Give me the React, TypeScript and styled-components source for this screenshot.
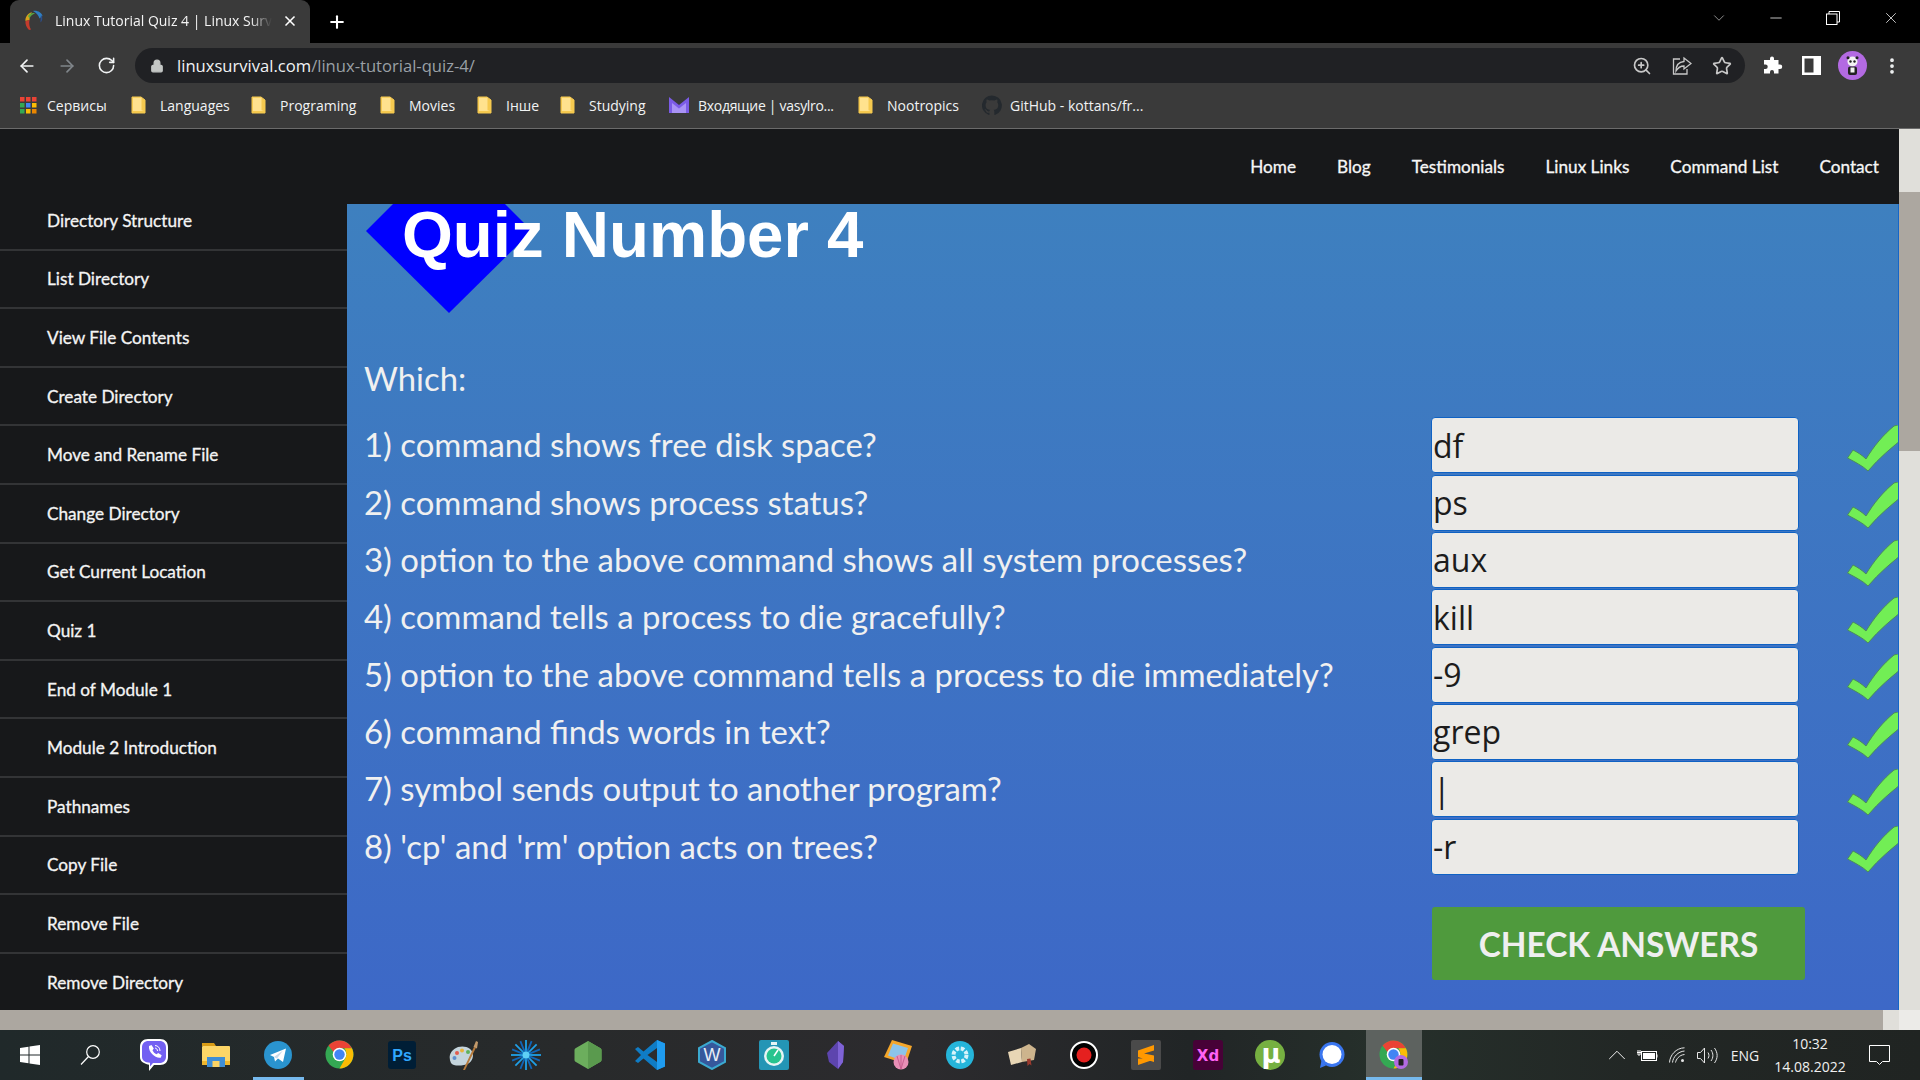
import React from "react";
import styled, { createGlobalStyle } from "styled-components";
import {
  ArrowLeft,
  ArrowRight,
  RotateCw,
  Lock,
  ZoomIn,
  Star,
  MoreVertical,
  X,
  Plus,
  Minus,
  ChevronDown,
  ChevronUp,
} from "lucide-react";

const chromeFont = `"Open Sans", "Noto Sans", "Liberation Sans", sans-serif`;
const siteFont = `Lato, "Open Sans", "Liberation Sans", sans-serif`;

const GlobalStyle = createGlobalStyle`
  html, body {
    margin: 0;
    padding: 0;
    overflow: hidden;
    background: #000;
  }
  * {
    box-sizing: border-box;
  }
`;

const Screen = styled.div`
  width: 1920px;
  height: 1080px;
  display: flex;
  flex-direction: column;
  overflow: hidden;
`;

/* browser chrome */
const TabStrip = styled.div`
  height: 43px;
  flex: none;
  background: #000;
  display: flex;
  align-items: center;
  padding-left: 10px;
  color: #fff;
`;

const Tab = styled.div`
  width: 300px;
  height: 43px;
  align-self: flex-end;
  background: #3a3a3a;
  border-radius: 9px 9px 0 0;
  display: flex;
  align-items: center;
  padding-left: 14px;
  padding-bottom: 2px;
`;

const TabTitle = styled.span`
  font: 14px ${chromeFont};
  color: #f4f4f4;
  width: 217px;
  margin-left: 11px;
  white-space: nowrap;
  overflow: hidden;
  mask-image: linear-gradient(90deg, #000 90%, transparent);
`;

const TabClose = styled.span`
  display: flex;
  margin-left: 10px;
`;

const NewTab = styled.span`
  display: flex;
  margin-left: 17px;
`;

const WindowControls = styled.div`
  margin-left: auto;
  display: flex;
  align-items: center;
  padding-bottom: 7px;
`;

const WindowButton = styled.span<{ $w: number }>`
  width: ${(p) => p.$w}px;
  display: flex;
  justify-content: center;
`;

const Toolbar = styled.div`
  height: 45px;
  flex: none;
  background: #3a3a3a;
  display: flex;
  align-items: flex-start;
  padding-top: 5px;
`;

const NavIcons = styled.div`
  width: 135px;
  height: 35px;
  display: flex;
  align-items: center;
  padding-left: 17px;
  gap: 20px;
`;

const Omnibox = styled.div`
  width: 1610px;
  height: 35px;
  background: #202124;
  border-radius: 18px;
  display: flex;
  align-items: center;
  padding-left: 15px;
  padding-right: 13px;
`;

const Url = styled.span`
  font: 16.6px ${chromeFont};
  color: #f1f3f4;
  margin-left: 13px;
`;

const UrlPath = styled.span`
  color: #9aa0a6;
`;

const OmniActions = styled.div`
  margin-left: auto;
  display: flex;
  align-items: center;
  gap: 20px;
`;

const ToolbarActions = styled.div`
  height: 35px;
  display: flex;
  align-items: center;
  padding-left: 18px;
  gap: 19px;
`;

const Avatar = styled.span`
  width: 29px;
  height: 29px;
  border-radius: 50%;
  background: #b36ae2;
  display: flex;
  align-items: center;
  justify-content: center;
  margin-left: -2px;
`;

const MenuDots = styled(MoreVertical)`
  margin-left: -4px;
`;

const BookmarkBar = styled.div`
  height: 41px;
  flex: none;
  background: #3a3a3a;
  border-bottom: 1px solid #6b6b6b;
  display: flex;
  align-items: center;
  padding-left: 20px;
  padding-bottom: 6px;
`;

const Bookmark = styled.div<{ $w: number; $gap?: number; $tight?: boolean }>`
  width: ${(p) => p.$w}px;
  display: flex;
  align-items: center;
  gap: ${(p) => p.$gap ?? 10}px;
  font: 14px ${chromeFont};
  letter-spacing: ${(p) => (p.$tight ? "-0.3px" : "0")};
  color: #f1f3f4;
  white-space: nowrap;
`;

const FolderGlyph = styled.svg`
  margin-right: 4px;
`;

/* page */
const Viewport = styled.div`
  height: 881px;
  flex: none;
  display: flex;
`;

const Page = styled.div`
  width: 1899px;
  display: flex;
  flex-direction: column;
  background: #17181a;
  overflow: hidden;
`;

const SiteHeader = styled.header`
  height: 75px;
  flex: none;
  display: flex;
  align-items: center;
  justify-content: flex-end;
  padding-right: 20px;
  gap: 41px;
`;

const NavLink = styled.a`
  font: 17.2px ${siteFont};
  -webkit-text-stroke: 0.3px #f6f6f6;
  color: #f6f6f6;
`;

const Body = styled.div`
  flex: 1;
  display: flex;
`;

const Sidebar = styled.nav`
  width: 347px;
  flex: none;
  margin-top: -12px;
`;

const SideItem = styled.a`
  display: flex;
  align-items: center;
  height: 58.6px;
  padding-left: 47px;
  border-bottom: 2px solid #333436;
  font: 17.2px ${siteFont};
  -webkit-text-stroke: 0.3px #f4f4f4;
  color: #f4f4f4;
`;

const Content = styled.main`
  width: 1552px;
  position: relative;
  padding-left: 17px;
  border-right: 1px solid #1566c8;
  border-bottom: 1px solid #1566c8;
  background: linear-gradient(180deg, #3e80bf 0%, #3d68c7 100%);
`;

const Diamond = styled.div`
  position: absolute;
  left: 19px;
  top: 0;
  width: 166px;
  height: 109px;
  background: #0000ff;
  clip-path: polygon(27px 0, 139px 0, 166px 27px, 83px 109px, 0 27px);
`;

const Title = styled.h1`
  position: relative;
  margin: 0 0 0 38px;
  height: 60px;
  font: 700 65.4px/62px "Liberation Sans", Arial, sans-serif;
  color: #fff;
`;

const Lead = styled.p`
  margin: 93px 0 0;
  height: 59.5px;
  font: 32.8px/44px ${siteFont};
  color: #f0f0f0;
`;

const QuizRow = styled.div`
  display: grid;
  grid-template-columns: 1067px 368px 48px 51px;
  height: 57.35px;
  align-items: center;
`;

const Question = styled.span`
  font: 32.9px ${siteFont};
  color: #f0f0f0;
  padding-bottom: 1px;
`;

const AnswerField = styled.div`
  height: 56px;
  background: #ebeae7;
  border: 1px solid #0f62c4;
  border-radius: 4px;
  padding-left: 1px;
  display: flex;
  align-items: center;
  font: 32px ${chromeFont};
  color: #1c1c1c;
`;

const Tick = styled.svg`
  align-self: end;
  margin-bottom: 2px;
`;

const ActionRow = styled.div`
  margin-top: 32px;
  margin-left: 1068px;
`;

const CheckButton = styled.button`
  width: 373px;
  height: 73px;
  border: none;
  border-radius: 3px;
  background: #4f9a3d;
  color: #efefef;
  font: 700 33.4px ${siteFont};
  padding: 0;
`;

const VerticalScroll = styled.div`
  width: 21px;
  flex: none;
  background: #e0dfda;
  padding-top: 63px;
`;

const VerticalThumb = styled.div`
  height: 259px;
  background: #aca7a0;
`;

const HorizontalScroll = styled.div`
  height: 20px;
  flex: none;
  display: flex;
`;

const HorizontalThumb = styled.div`
  width: 1883px;
  background: #aca7a0;
`;

const ScrollButton = styled.div`
  width: 16px;
  background: #e0dfda;
`;

const ScrollCorner = styled.div`
  flex: 1;
  background: #ecebe8;
`;

/* taskbar */
const Taskbar = styled.div`
  height: 50px;
  flex: none;
  display: flex;
  align-items: stretch;
  background: linear-gradient(90deg, #20292a 0%, #282a2b 30%, #2c2b2e 48%, #212526 62%, #26302b 72%, #222725 85%, #202422 100%);
  color: #f0f0f0;
`;

const StartButton = styled.div`
  width: 60px;
  display: flex;
  align-items: center;
  justify-content: center;
`;

const SearchButton = styled(StartButton)`
  margin-right: 3px;
`;

const TaskSlot = styled.div<{ $active?: boolean; $running?: boolean }>`
  width: ${(p) => (p.$active ? 56 : 62)}px;
  margin: ${(p) => (p.$active ? "0 3px" : "0")};
  display: flex;
  align-items: center;
  justify-content: center;
  position: relative;
  background: ${(p) => (p.$active ? "#5d625f" : "transparent")};

  &::after {
    content: "";
    display: ${(p) => (p.$running ? "block" : "none")};
    position: absolute;
    left: ${(p) => (p.$active ? 0 : 6)}px;
    right: ${(p) => (p.$active ? 0 : 5)}px;
    bottom: 0;
    height: 3px;
    background: #76b9ed;
  }
`;

const Tray = styled.div`
  margin-left: auto;
  display: flex;
  align-items: center;
`;

const TrayIcon = styled.span<{ $w: number }>`
  width: ${(p) => p.$w}px;
  display: flex;
  justify-content: center;
`;

const TrayLang = styled.span`
  width: 46px;
  text-align: center;
  font: 14px ${chromeFont};
`;

const Clock = styled.div`
  width: 84px;
  text-align: center;
  font: 14px/23px ${chromeFont};
`;

const Notify = styled.span`
  width: 68px;
  padding-right: 14px;
  display: flex;
  justify-content: center;
`;

const sideItems = [
  "Directory Structure",
  "List Directory",
  "View File Contents",
  "Create Directory",
  "Move and Rename File",
  "Change Directory",
  "Get Current Location",
  "Quiz 1",
  "End of Module 1",
  "Module 2 Introduction",
  "Pathnames",
  "Copy File",
  "Remove File",
  "Remove Directory",
];

const navItems = ["Home", "Blog", "Testimonials", "Linux Links", "Command List", "Contact"];

const quiz = [
  ["1) command shows free disk space?", "df"],
  ["2) command shows process status?", "ps"],
  ["3) option to the above command shows all system processes?", "aux"],
  ["4) command tells a process to die gracefully?", "kill"],
  ["5) option to the above command tells a process to die immediately?", "-9"],
  ["6) command finds words in text?", "grep"],
  ["7) symbol sends output to another program?", "|"],
  ["8) 'cp' and 'rm' option acts on trees?", "-r"],
];

const FolderIcon = () => (
  <FolderGlyph width="15" height="18" viewBox="0 0 15 18">
    <path d="M1 1h9l4 3v13H1z" fill="#f5c94f" stroke="#f5c94f" strokeLinejoin="round" />
    <path d="M2 1.800h8.500v12.500l2.500.8H2z" fill="#ffe28e" />
  </FolderGlyph>
);

const AppsIcon = () => {
  const colors = ["#ea4335", "#ea4335", "#ea4335", "#34a853", "#4285f4", "#fbbc04", "#34a853", "#fbbc04", "#ea8600"];
  return (
    <svg width="17" height="17" viewBox="0 0 17 17">
      {colors.map((c, i) => (
        <rect key={i} x={(i % 3) * 6} y={Math.floor(i / 3) * 6} width="4.500" height="4.500" fill={c} />
      ))}
    </svg>
  );
};

const MailIcon = () => (
  <svg width="20" height="16" viewBox="0 0 20 16">
    <path d="M0 0l10 8 10-8v16H0z" fill="#7b5be6" />
    <path d="M3 6l7 5.500L17 6v10H3z" fill="#a993f5" />
  </svg>
);

const GithubIcon = () => (
  <svg width="20" height="20" viewBox="0 0 24 24">
    <path
      fill="#24292e"
      d="M12 .5a12 12 0 0 0-3.800 23.400c.6.100.8-.3.8-.6v-2c-3.300.7-4-1.600-4-1.600-.6-1.400-1.400-1.800-1.400-1.800-1.100-.7.100-.7.100-.7 1.200.1 1.800 1.200 1.800 1.200 1.100 1.800 2.800 1.300 3.500 1 .1-.8.4-1.300.8-1.600-2.700-.3-5.500-1.300-5.500-5.900 0-1.300.5-2.400 1.200-3.200-.1-.3-.5-1.500.1-3.200 0 0 1-.3 3.300 1.200a11.500 11.500 0 0 1 6 0c2.300-1.500 3.300-1.200 3.300-1.200.7 1.700.2 2.900.1 3.200.8.800 1.200 1.900 1.200 3.200 0 4.600-2.800 5.600-5.500 5.900.4.400.8 1.100.8 2.200v3.300c0 .3.2.7.8.6A12 12 0 0 0 12 .5z"
    />
  </svg>
);

const Favicon = () => (
  <svg width="20" height="21" viewBox="0 0 20 21">
    <path d="M8 2C3.500 3.500 1 7.500 1.500 11l4-1c0-3 .8-6 2.500-8z" fill="#d9a21b" />
    <path d="M5 20C2.500 17.500 1 14 1.500 11l4-1c-.8 3.500 0 7 1.500 9.500z" fill="#c43b2c" />
    <path d="M9 1c4.500-.8 8.500 1.500 9.500 5l-3 2.500C14.500 5.500 12.500 2.800 9 1z" fill="#2f7fc4" />
    <path d="M17 5c2 2.500 1.500 5.500-.5 7.500 0-2.500 0-5 .5-7.500z" fill="#2c4f8c" />
    <path d="M4 6c1.800-2.500 4.500-3.500 7-2.500-2.500.8-4.500 2.500-5.500 5z" fill="#5aa541" />
  </svg>
);

const PandaFace = () => (
  <svg width="15" height="19" viewBox="0 0 15 19">
    <circle cx="7.500" cy="5.500" r="5" fill="#f3f3f3" />
    <circle cx="3" cy="1.800" r="1.500" fill="#222" />
    <circle cx="12" cy="1.800" r="1.500" fill="#222" />
    <circle cx="5.500" cy="5.500" r="1.200" fill="#222" />
    <circle cx="9.500" cy="5.500" r="1.200" fill="#222" />
    <rect x="3" y="10.500" width="9" height="8.500" rx="2" fill="#222" />
    <rect x="5.500" y="11.500" width="4" height="5" fill="#f3f3f3" />
  </svg>
);

const CheckMark = () => (
  <Tick width="51" height="47" viewBox="0 0 51 47">
    <path
      d="M0.500 33 L6 25 C10 27 15 30 19 34 C27 21 36 10 47 1 L58 -2 L58 12 C45 22 32 33 21 46 C16 41 8 37 0.500 33 Z"
      fill="#72ee55"
      stroke="#4b8c5c"
      strokeWidth="1"
    />
  </Tick>
);

/* taskbar logos */
const ViberIcon = () => (
  <svg width="28" height="32" viewBox="0 0 28 32">
    <path d="M8 0h12c5 0 8 3 8 8v10c0 5-3 8-8 8h-6l-5 6v-6.300C3 24.500 0 22 0 18V8c0-5 3-8 8-8z" fill="#fff" />
    <path d="M8.500 2h11C23.500 2 26 4.500 26 8.500v9c0 4-2.500 6.500-6.500 6.500H13l-3 3.500v-3.800C5 23.500 2 21.500 2 17.500v-9C2 4.500 4.500 2 8.500 2z" fill="#7360f2" />
    <path d="M9 7l2.500-1 2.300 3.500-1.300 1.700c.9 2 2 3 4 4l1.700-1.300 3.500 2.300-1 2.500C16 20 8 13 9 7z" fill="#fff" />
    <path d="M15 6.500c3 .2 5 2.300 5 5.500M15 9c1.500.2 2.500 1.300 2.500 3" stroke="#fff" strokeWidth="1" fill="none" />
  </svg>
);

const ExplorerIcon = () => (
  <svg width="28" height="24" viewBox="0 0 28 24">
    <path d="M0 0h12l2 3H0z" fill="#d99c16" />
    <rect y="3" width="28" height="19" rx="1" fill="#fdd667" />
    <path d="M0 18h28v4H0z" fill="#eeb62e" />
    <rect x="5" y="14" width="18" height="10" fill="#3f8ed6" />
    <rect x="10.500" y="18" width="7" height="6" fill="#fbd364" />
  </svg>
);

const TelegramIcon = () => (
  <svg width="28" height="28" viewBox="0 0 28 28">
    <circle cx="14" cy="14" r="14" fill="#2a94cf" />
    <path d="M6 14l16-6.500-3 13.500-5-3.500-3 3-1-4.500z" fill="#fff" />
    <path d="M10 16l9-6.500-6 8z" fill="#c8daea" />
  </svg>
);

const ChromeIcon = ({ badge }: { badge?: boolean }) => (
  <svg width="30" height="30" viewBox="0 0 30 30">
    <circle cx="14.500" cy="14.500" r="14" fill="#34a853" />
    <path d="M14.500.5c5.500 0 10.200 3.200 12.400 7.800H14.500a6.200 6.200 0 0 0-5.800 4L3.500 5.500C6 2.500 10 .5 14.500.5z" fill="#ea4335" />
    <path d="M26.900 8.300c2.700 5.500 1.500 11.500-2 15.500-3 3.300-6.500 4.700-10.400 4.700l6-10.500c1.500-2.800 1.200-6.500-1-9.700z" fill="#fbbc04" />
    <circle cx="14.500" cy="14.500" r="6.800" fill="#fff" />
    <circle cx="14.500" cy="14.500" r="5.200" fill="#4285f4" />
    {badge && <circle cx="22" cy="22" r="7" fill="#b36ae2" />}
    {badge && <rect x="19.500" y="19" width="5" height="6.500" rx="1" fill="#222" />}
  </svg>
);

const PsIcon = () => (
  <svg width="28" height="28" viewBox="0 0 28 28">
    <rect width="28" height="28" rx="3" fill="#001e36" />
    <text x="14" y="20" textAnchor="middle" fontFamily="Liberation Sans" fontWeight="700" fontSize="16" fill="#31a8ff">Ps</text>
  </svg>
);

const PaletteIcon = () => (
  <svg width="30" height="29" viewBox="0 0 30 29">
    <path d="M2 22C-1 16 1 9 9 6c7-2 15 1 15 8 0 5-3 9-9 10-5 1-11 1-13-2z" fill="#c4d4dc" />
    <circle cx="8" cy="12" r="2" fill="#e35d4f" />
    <circle cx="13" cy="9.500" r="2" fill="#e8b33a" />
    <circle cx="19" cy="11" r="2" fill="#5fb15b" />
    <circle cx="5.500" cy="17" r="2" fill="#5d8fd0" />
    <path d="M14 29L25 6l1.800.9L16 29z" fill="#b5793a" />
    <path d="M24.500 6L27 0l2 1-1 6.500z" fill="#c29a6b" />
  </svg>
);

const SparkIcon = () => (
  <svg width="30" height="30" viewBox="0 0 30 30" strokeWidth="1.800">
    {[0, 22, 45, 68, 90, 112, 135, 158].map((a) => (
      <line key={a} x1="15" y1="0" x2="15" y2="30" transform={`rotate(${a} 15 15)`} stroke={a % 45 === 0 ? "#1fa0e8" : "#1065b8"} />
    ))}
    <circle cx="15" cy="15" r="3.500" fill="#5fd0f5" />
  </svg>
);

const NodeIcon = () => (
  <svg width="28" height="30" viewBox="0 0 28 30">
    <path d="M14 1l12.500 7.300a2 2 0 0 1 1 1.700v10a2 2 0 0 1-1 1.700L14 29 1.500 21.700a2 2 0 0 1-1-1.700V10a2 2 0 0 1 1-1.700z" fill="#6cae5d" />
    <path d="M14 1l12.500 7.300a2 2 0 0 1 1 1.700v10a2 2 0 0 1-1 1.700L14 29z" fill="#5a9a4e" />
  </svg>
);

const VsCodeIcon = () => (
  <svg width="30" height="30" viewBox="0 0 30 30">
    <path d="M22 0l8 3.500v23L22 30 8.500 18.500 3 23l-3-2 6-6-6-6 3-2 5.500 4.500z" fill="#0f7cc5" />
    <path d="M22 0l8 3.500v23L22 30z" fill="#1f9cf0" />
    <path d="M22 8l-9.500 7 9.500 7z" fill="#2c2c2e" />
  </svg>
);

const WordIcon = () => (
  <svg width="30" height="30" viewBox="0 0 30 30">
    <path d="M15 1l13 7v14l-13 7-13-7V8z" fill="#36589c" stroke="#3ba9d0" strokeWidth="2" />
    <text x="15" y="21" textAnchor="middle" fontFamily="Liberation Sans" fontSize="18" fill="#e8eef6">W</text>
  </svg>
);

const TimerIcon = () => (
  <svg width="30" height="30" viewBox="0 0 30 30">
    <rect width="30" height="30" rx="2" fill="#2495b5" />
    <rect x="12" y="2" width="6" height="3" fill="#e6f4f4" />
    <circle cx="15" cy="16" r="10" fill="#e6f4f4" />
    <circle cx="15" cy="16" r="7.500" fill="#27c48f" />
    <path d="M15 16l4-6" stroke="#fff" strokeWidth="1.500" />
  </svg>
);

const ObsidianIcon = () => (
  <svg width="18" height="28" viewBox="0 0 18 28">
    <path d="M11 0l6 5-1 16-5 7L2 21 0 12z" fill="#5d45ae" />
    <path d="M11 0l6 5-1 16-5 7z" fill="#7f63d6" />
  </svg>
);

const PhotosIcon = () => (
  <svg width="28" height="30" viewBox="0 0 28 30">
    <path d="M8 0l20 6-6 18L0 17z" fill="#f4a62a" />
    <path d="M9 3.500l15 4.500-4.500 13L4 15.500z" fill="#8cc4ea" />
    <circle cx="17" cy="22" r="7.500" fill="#e88fb6" />
    <path d="M17 15v14M13 16l4 13M21 16l-4 13" stroke="#c95f91" />
  </svg>
);

const GearBadgeIcon = () => (
  <svg width="28" height="28" viewBox="0 0 28 28">
    <circle cx="14" cy="14" r="14" fill="#25b5da" />
    <circle cx="14" cy="14" r="6.500" fill="none" stroke="#d6f3fa" strokeWidth="4" strokeDasharray="3.500 1.600" />
  </svg>
);

const BookIcon = () => (
  <svg width="28" height="22" viewBox="0 0 28 22">
    <path d="M0 8l13-4 1 14-11 3z" fill="#e8d6b5" />
    <path d="M13 4l8-4 7 5-2 11-12 2z" fill="#cdb48d" />
    <path d="M19 15l.5 7 2-2 2 1.500-1-7z" fill="#9c3a2e" />
  </svg>
);

const RecordIcon = () => (
  <svg width="28" height="28" viewBox="0 0 28 28">
    <circle cx="14" cy="14" r="13" fill="#000" stroke="#fff" strokeWidth="2" />
    <circle cx="14" cy="14" r="7.500" fill="#e5201f" />
  </svg>
);

const SublimeIcon = () => (
  <svg width="30" height="30" viewBox="0 0 30 30">
    <rect width="30" height="30" rx="2" fill="#4a4a4a" />
    <path d="M23 5L7 10.500v6.500l16 5v-6.500L13 13.500l10-3zM7 18.500v6.500l16-5.500v-1z" fill="#ff9800" />
  </svg>
);

const XdIcon = () => (
  <svg width="30" height="30" viewBox="0 0 30 30">
    <rect width="30" height="30" rx="3" fill="#470137" />
    <text x="15" y="21" textAnchor="middle" fontFamily="DejaVu Sans" fontWeight="700" fontSize="15" fill="#ff61f6">Xd</text>
  </svg>
);

const TorrentIcon = () => (
  <svg width="30" height="30" viewBox="0 0 30 30">
    <circle cx="15" cy="15" r="15" fill="#76b041" />
    <text x="16" y="23" textAnchor="middle" fontFamily="DejaVu Sans" fontWeight="700" fontSize="26" fill="#fff">µ</text>
  </svg>
);

const SignalIcon = () => (
  <svg width="28" height="28" viewBox="0 0 28 28">
    <circle cx="14" cy="13.500" r="12.500" fill="#3a76f0" />
    <circle cx="14" cy="13.500" r="9.500" fill="#fff" />
    <path d="M2 27l1.500-7.500 4.500 5z" fill="#3a76f0" />
  </svg>
);

const taskIcons = [
  { icon: <ViberIcon /> },
  { icon: <ExplorerIcon /> },
  { icon: <TelegramIcon />, running: true },
  { icon: <ChromeIcon /> },
  { icon: <PsIcon /> },
  { icon: <PaletteIcon /> },
  { icon: <SparkIcon /> },
  { icon: <NodeIcon /> },
  { icon: <VsCodeIcon /> },
  { icon: <WordIcon /> },
  { icon: <TimerIcon /> },
  { icon: <ObsidianIcon /> },
  { icon: <PhotosIcon /> },
  { icon: <GearBadgeIcon /> },
  { icon: <BookIcon /> },
  { icon: <RecordIcon /> },
  { icon: <SublimeIcon /> },
  { icon: <XdIcon /> },
  { icon: <TorrentIcon /> },
  { icon: <SignalIcon /> },
];

const App = () => {
  return (
    <Screen>
      <GlobalStyle />
      <TabStrip>
        <Tab>
          <Favicon />
          <TabTitle>Linux Tutorial Quiz 4 | Linux Survival</TabTitle>
          <TabClose>
            <X size={16} strokeWidth={2.5} />
          </TabClose>
        </Tab>
        <NewTab>
          <Plus size={20} strokeWidth={2.5} />
        </NewTab>
        <WindowControls>
          <WindowButton $w={58}>
            <ChevronDown size={18} strokeWidth={1} color="#bbb" />
          </WindowButton>
          <WindowButton $w={56}>
            <Minus size={18} strokeWidth={1} />
          </WindowButton>
          <WindowButton $w={58}>
            <svg width="14" height="14" viewBox="0 0 14 14" fill="none" stroke="#fff" strokeWidth="1">
              <rect x="0.500" y="3" width="10.500" height="10.500" />
              <path d="M3 3V.5h10.500V11H11" />
            </svg>
          </WindowButton>
          <WindowButton $w={58}>
            <X size={18} strokeWidth={1} />
          </WindowButton>
        </WindowControls>
      </TabStrip>
      <Toolbar>
        <NavIcons>
          <ArrowLeft size={20} color="#f1f3f4" strokeWidth={2} />
          <ArrowRight size={20} color="#80868b" strokeWidth={2} />
          <RotateCw size={19} color="#f1f3f4" strokeWidth={2} />
        </NavIcons>
        <Omnibox>
          <Lock size={14} color="#c4c7c5" fill="#c4c7c5" />
          <Url>
            linuxsurvival.com<UrlPath>/linux-tutorial-quiz-4/</UrlPath>
          </Url>
          <OmniActions>
            <ZoomIn size={20} color="#c8c8c8" />
            <svg width="20" height="20" viewBox="0 0 20 20" fill="none" stroke="#c8c8c8" strokeWidth="1.300">
              <path d="M8 3H1.500v15H15v-5" />
              <path d="M12 2l7 5.500-7 5.500V10c-4 0-6 1.500-8 5 0-6 3-9 8-9.500z" />
            </svg>
            <Star size={20} color="#c8c8c8" strokeWidth={2} />
          </OmniActions>
        </Omnibox>
        <ToolbarActions>
          <svg width="20" height="20" viewBox="0 0 20 20" fill="#fff">
            <path d="M7 2.500a2 2 0 0 1 4 0V4h4.500v4.500H17a2.200 2.200 0 0 1 0 4.500h-1.500v4.500H11V16a2 2 0 0 0-4 0v1.500H1V13h1.500a2.200 2.200 0 0 0 0-4.500H1V4h6z" />
          </svg>
          <svg width="19" height="19" viewBox="0 0 19 19">
            <rect width="19" height="19" fill="#fff" />
            <rect x="2.500" y="2.500" width="9" height="14" fill="#3a3a3a" />
          </svg>
          <Avatar>
            <PandaFace />
          </Avatar>
          <MenuDots size={20} color="#f1f3f4" strokeWidth={2.5} />
        </ToolbarActions>
      </Toolbar>
      <BookmarkBar>
        <Bookmark $w={111}>
          <AppsIcon />
          Сервисы
        </Bookmark>
        <Bookmark $w={120}>
          <FolderIcon />
          Languages
        </Bookmark>
        <Bookmark $w={129}>
          <FolderIcon />
          Programing
        </Bookmark>
        <Bookmark $w={97}>
          <FolderIcon />
          Movies
        </Bookmark>
        <Bookmark $w={83}>
          <FolderIcon />
          Інше
        </Bookmark>
        <Bookmark $w={109}>
          <FolderIcon />
          Studying
        </Bookmark>
        <Bookmark $w={189} $gap={9} $tight>
          <MailIcon />
          Входящие | vasylro...
        </Bookmark>
        <Bookmark $w={124}>
          <FolderIcon />
          Nootropics
        </Bookmark>
        <Bookmark $w={170} $gap={8}>
          <GithubIcon />
          GitHub - kottans/fr...
        </Bookmark>
      </BookmarkBar>
      <Viewport>
        <Page>
          <SiteHeader>
            {navItems.map((item) => (
              <NavLink key={item}>{item}</NavLink>
            ))}
          </SiteHeader>
          <Body>
            <Sidebar>
              {sideItems.map((item) => (
                <SideItem key={item}>{item}</SideItem>
              ))}
            </Sidebar>
            <Content>
              <Diamond />
              <Title>Quiz Number 4</Title>
              <Lead>Which:</Lead>
              {quiz.map(([question, answer]) => (
                <QuizRow key={question}>
                  <Question>{question}</Question>
                  <AnswerField>{answer}</AnswerField>
                  <span />
                  <CheckMark />
                </QuizRow>
              ))}
              <ActionRow>
                <CheckButton>CHECK ANSWERS</CheckButton>
              </ActionRow>
            </Content>
          </Body>
        </Page>
        <VerticalScroll>
          <VerticalThumb />
        </VerticalScroll>
      </Viewport>
      <HorizontalScroll>
        <HorizontalThumb />
        <ScrollButton />
        <ScrollCorner />
      </HorizontalScroll>
      <Taskbar>
        <StartButton>
          <svg width="20" height="20" viewBox="0 0 20 20" fill="#fff">
            <path d="M0 3l8.500-1.200v7.700H0zM9.500 1.600L20 0v9.500H9.500zM0 10.500h8.500v7.700L0 17zM9.500 10.500H20V20L9.500 18.400z" />
          </svg>
        </StartButton>
        <SearchButton>
          <svg width="20" height="20" viewBox="0 0 20 20" fill="none" stroke="#fff" strokeWidth="1.200">
            <circle cx="13" cy="7" r="6.300" />
            <path d="M8.500 11.500L1 19.500" />
          </svg>
        </SearchButton>
        {taskIcons.map((item, i) => (
          <TaskSlot key={i} $running={item.running}>
            {item.icon}
          </TaskSlot>
        ))}
        <TaskSlot $active $running>
          <ChromeIcon badge />
        </TaskSlot>
        <Tray>
          <TrayIcon $w={30}>
            <ChevronUp size={30} strokeWidth={0.8} />
          </TrayIcon>
          <TrayIcon $w={30}>
            <svg width="21" height="13" viewBox="0 0 21 13" fill="none" stroke="#fff">
              <rect x="4.500" y="2.500" width="15" height="9" />
              <rect x="6" y="4" width="12" height="6" fill="#fff" stroke="none" />
              <path d="M20 5.500v3" />
              <path d="M0 3.500h4M1 1v5h2V1" />
            </svg>
          </TrayIcon>
          <TrayIcon $w={30}>
            <svg width="16" height="16" viewBox="0 0 16 16" fill="none" stroke="#e6e6e6" strokeWidth="1">
              <path d="M0.500 15.500C1 8 7 1 15.500.8M3.500 15.500C4 10 9 4.500 15.500 4M6.500 15.500C7 12.500 10 8 15.500 7.500" />
              <circle cx="13.500" cy="13.500" r="1.500" fill="#e6e6e6" stroke="none" />
            </svg>
          </TrayIcon>
          <TrayIcon $w={30}>
            <svg width="21" height="17" viewBox="0 0 21 17" fill="none" stroke="#e6e6e6" strokeWidth="1">
              <path d="M.5 5.500h3l4-4.500v15l-4-4.500h-3z" />
              <path d="M11 5.500c1.300 2 1.300 4 0 6M14 3c2.500 3.500 2.500 7.500 0 11M17.500 1c3.500 5 3.500 10 0 15" />
            </svg>
          </TrayIcon>
          <TrayLang>ENG</TrayLang>
          <Clock>
            10:32
            <br />
            14.08.2022
          </Clock>
          <Notify>
            <svg width="21" height="20" viewBox="0 0 21 20" fill="none" stroke="#fff" strokeWidth="1">
              <path d="M.5.500h20v16h-7l-3 3-3-3h-7z" />
            </svg>
          </Notify>
        </Tray>
      </Taskbar>
    </Screen>
  );
};

export default App;
